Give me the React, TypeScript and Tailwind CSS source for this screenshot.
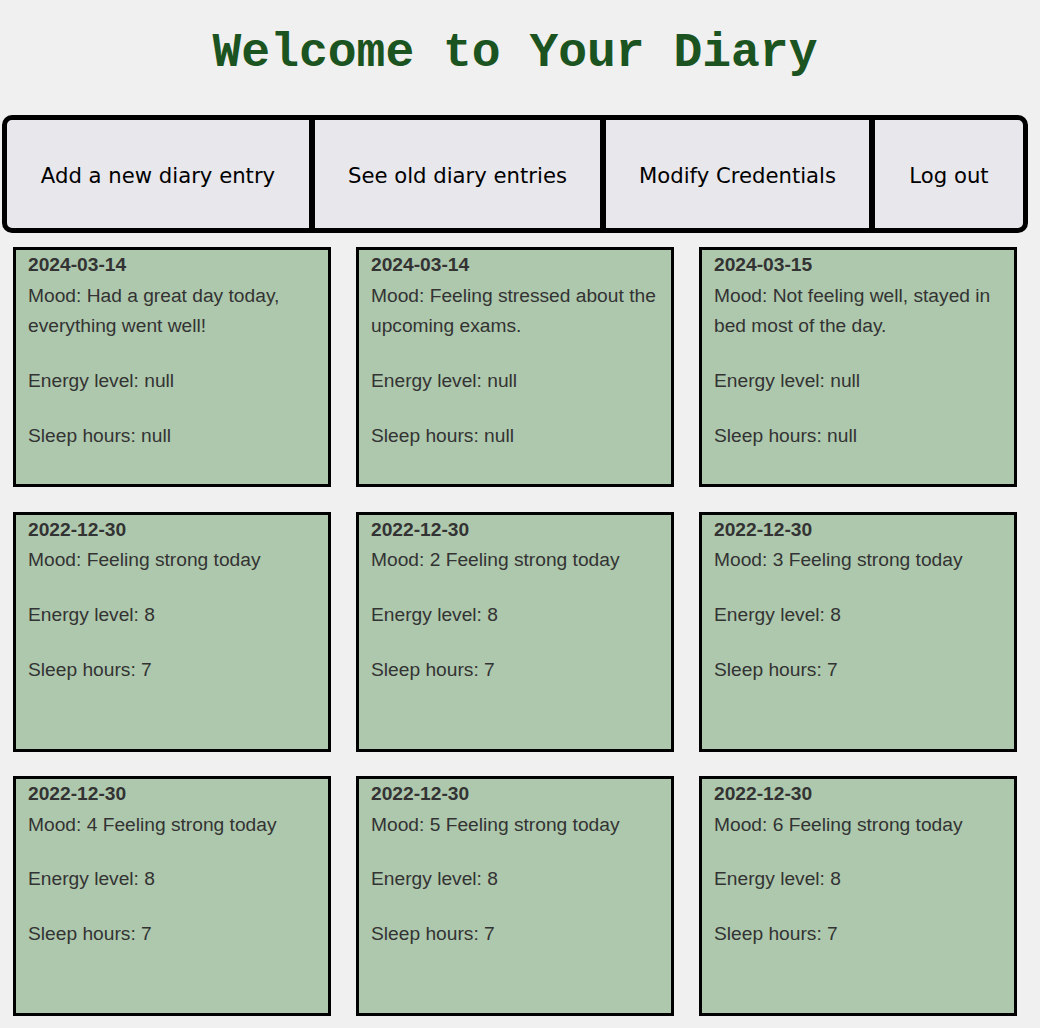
import * as React from "react"

type Entry = {
  date: string
  mood: string
  energy: string
  sleep: string
}

const entries: Entry[] = [
  { date: "2024-03-14", mood: "Had a great day today, everything went well!", energy: "null", sleep: "null" },
  { date: "2024-03-14", mood: "Feeling stressed about the upcoming exams.", energy: "null", sleep: "null" },
  { date: "2024-03-15", mood: "Not feeling well, stayed in bed most of the day.", energy: "null", sleep: "null" },
  { date: "2022-12-30", mood: "Feeling strong today", energy: "8", sleep: "7" },
  { date: "2022-12-30", mood: "2 Feeling strong today", energy: "8", sleep: "7" },
  { date: "2022-12-30", mood: "3 Feeling strong today", energy: "8", sleep: "7" },
  { date: "2022-12-30", mood: "4 Feeling strong today", energy: "8", sleep: "7" },
  { date: "2022-12-30", mood: "5 Feeling strong today", energy: "8", sleep: "7" },
  { date: "2022-12-30", mood: "6 Feeling strong today", energy: "8", sleep: "7" },
]

// widths include the 6px divider on the left of items 2-4
const navItems = [
  { label: "Add a new diary entry", width: "w-[302px]" },
  { label: "See old diary entries", width: "w-[291px]" },
  { label: "Modify Credentials", width: "w-[269px]" },
  { label: "Log out", width: "w-[154px]" },
]

function DiaryCard({ entry }: { entry: Entry }) {
  return (
    <div className="h-[240px] border-[3px] border-black bg-[#aec8ad] px-3 text-[19.2px] leading-[30.7px] text-[#333333] [font-family:'Liberation_Sans',Arial,sans-serif]">
      <div className="font-bold">{entry.date}</div>
      <p>Mood: {entry.mood}</p>
      <p className="mt-6">Energy level: {entry.energy}</p>
      <p className="mt-6">Sleep hours: {entry.sleep}</p>
    </div>
  )
}

export default function App() {
  return (
    <div className="min-h-screen bg-[#f0f0f0]">
      <div className="w-[1030px] pt-[26px]">
        <h1 className="h-[54px] text-center text-[48px] font-bold leading-[54px] text-[#1b5420] [font-family:'Liberation_Mono','Courier_New',monospace]">
          Welcome to Your Diary
        </h1>

        <nav className="mx-auto mt-[35px] flex w-fit shrink-0 overflow-hidden rounded-[10px] border-[5px] border-black bg-[#e8e7ec] [font-family:'DejaVu_Sans',Tahoma,sans-serif]">
          {navItems.map((item, i) => (
            <a
              key={item.label}
              href="#"
              className={`${item.width} flex h-[108px] shrink-0 items-center justify-center pt-[3px] text-[21.2px] text-black ${i > 0 ? "border-l-[6px] border-black" : ""}`}
            >
              {item.label}
            </a>
          ))}
        </nav>

        <div className="mx-auto mt-[14px] grid w-[1004px] grid-cols-[318px_318px_318px] justify-between gap-y-[24.5px] pb-6">
          {entries.map((entry, i) => (
            <DiaryCard key={i} entry={entry} />
          ))}
        </div>
      </div>
    </div>
  )
}
